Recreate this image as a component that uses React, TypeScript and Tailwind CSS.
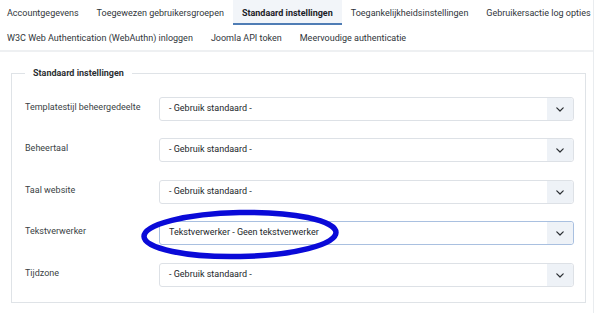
import React from "react";

const tabsRow1 = [
  { label: "Accountgegevens", active: false },
  { label: "Toegewezen gebruikersgroepen", active: false },
  { label: "Standaard instellingen", active: true },
  { label: "Toegankelijkheidsinstellingen", active: false },
  { label: "Gebruikersactie log opties", active: false },
];
const tabsRow2 = [
  "W3C Web Authentication (WebAuthn) inloggen",
  "Joomla API token",
  "Meervoudige authenticatie",
];

const rows = [
  { label: "Templatestijl beheergedeelte", value: "- Gebruik standaard -", mt: "mt-[17px]" },
  { label: "Beheertaal", value: "- Gebruik standaard -", mt: "mt-[17px]" },
  { label: "Taal website", value: "- Gebruik standaard -", mt: "mt-[18px]" },
  { label: "Tekstverwerker", value: "Tekstverwerker - Geen tekstverwerker", mt: "mt-[17px]", focus: true },
  { label: "Tijdzone", value: "- Gebruik standaard -", mt: "mt-[18px]" },
];

function Chevron() {
  return (
    <svg width="8" height="5" viewBox="0 0 8 5" fill="none">
      <path d="M0.8 0.8l3.2 3.2 3.2-3.2" stroke="#2b2f33" strokeWidth="1.2" strokeLinecap="round" strokeLinejoin="round" />
    </svg>
  );
}

export default function App() {
  return (
    <div
      className="relative w-[600px] h-[313px] overflow-hidden bg-white text-[#22262a] whitespace-nowrap"
      style={{ fontFamily: "Roboto, 'Liberation Sans', sans-serif" }}
    >
      <div className="w-[594px] h-full border-r border-[#e9ecef]">
        {/* Tabs */}
        <div className="border-b-2 border-[#eef0f2] bg-white">
          <div className="flex ml-[-2px] h-[25px] text-[9px] leading-[12px]">
            {tabsRow1.map((t) => (
              <div
                key={t.label}
                className={
                  t.active
                    ? "px-[9px] flex items-center bg-[#f2f5f9] border-b-2 border-[#4f7db5] font-bold text-[#1c2127] pt-[2px]"
                    : "px-[9px] flex items-center text-[#30353a]"
                }
              >
                {t.label}
              </div>
            ))}
          </div>
          <div className="flex ml-[-2px] h-[25px] text-[9px] leading-[12px]">
            {tabsRow2.map((t) => (
              <div key={t} className="px-[9px] flex items-center text-[#30353a]">
                {t}
              </div>
            ))}
          </div>
        </div>

        {/* Fieldset */}
        <fieldset className="ml-[11px] mt-[14px] w-[575px] border border-[#dfe3e7] pl-[13px] pr-[11px] pb-[15px]">
          <legend className="px-2 text-[9px] leading-[14px] font-bold text-[#2b2f33]">Standaard instellingen</legend>
          {rows.map((r) => (
            <div key={r.label} className={`flex ${r.mt}`}>
              <div className="w-[134px] pt-[4px] text-[9px] leading-[12px] text-[#3a3f44]">{r.label}</div>
              <div
                className={`flex-1 h-[24px] flex rounded-[3px] border ${
                  r.focus ? "border-[#a9c0e0]" : "border-[#dde1e6]"
                }`}
              >
                <div className="flex-1 flex items-center pl-[9px] text-[9px] text-[#22262a]">{r.value}</div>
                <div className="w-[26px] flex items-center justify-center bg-[#eef2f7] rounded-r-[3px]">
                  <Chevron />
                </div>
              </div>
            </div>
          ))}
        </fieldset>
      </div>

      {/* Hand-drawn annotation ellipse */}
      <svg className="absolute left-[138px] top-[206px]" width="206" height="58" viewBox="0 0 206 58" fill="none">
        <ellipse cx="102" cy="28.5" rx="96" ry="22" stroke="#0a0ad8" strokeWidth="5.5" transform="rotate(-1.2 102 28.5)" />
      </svg>
    </div>
  );
}
